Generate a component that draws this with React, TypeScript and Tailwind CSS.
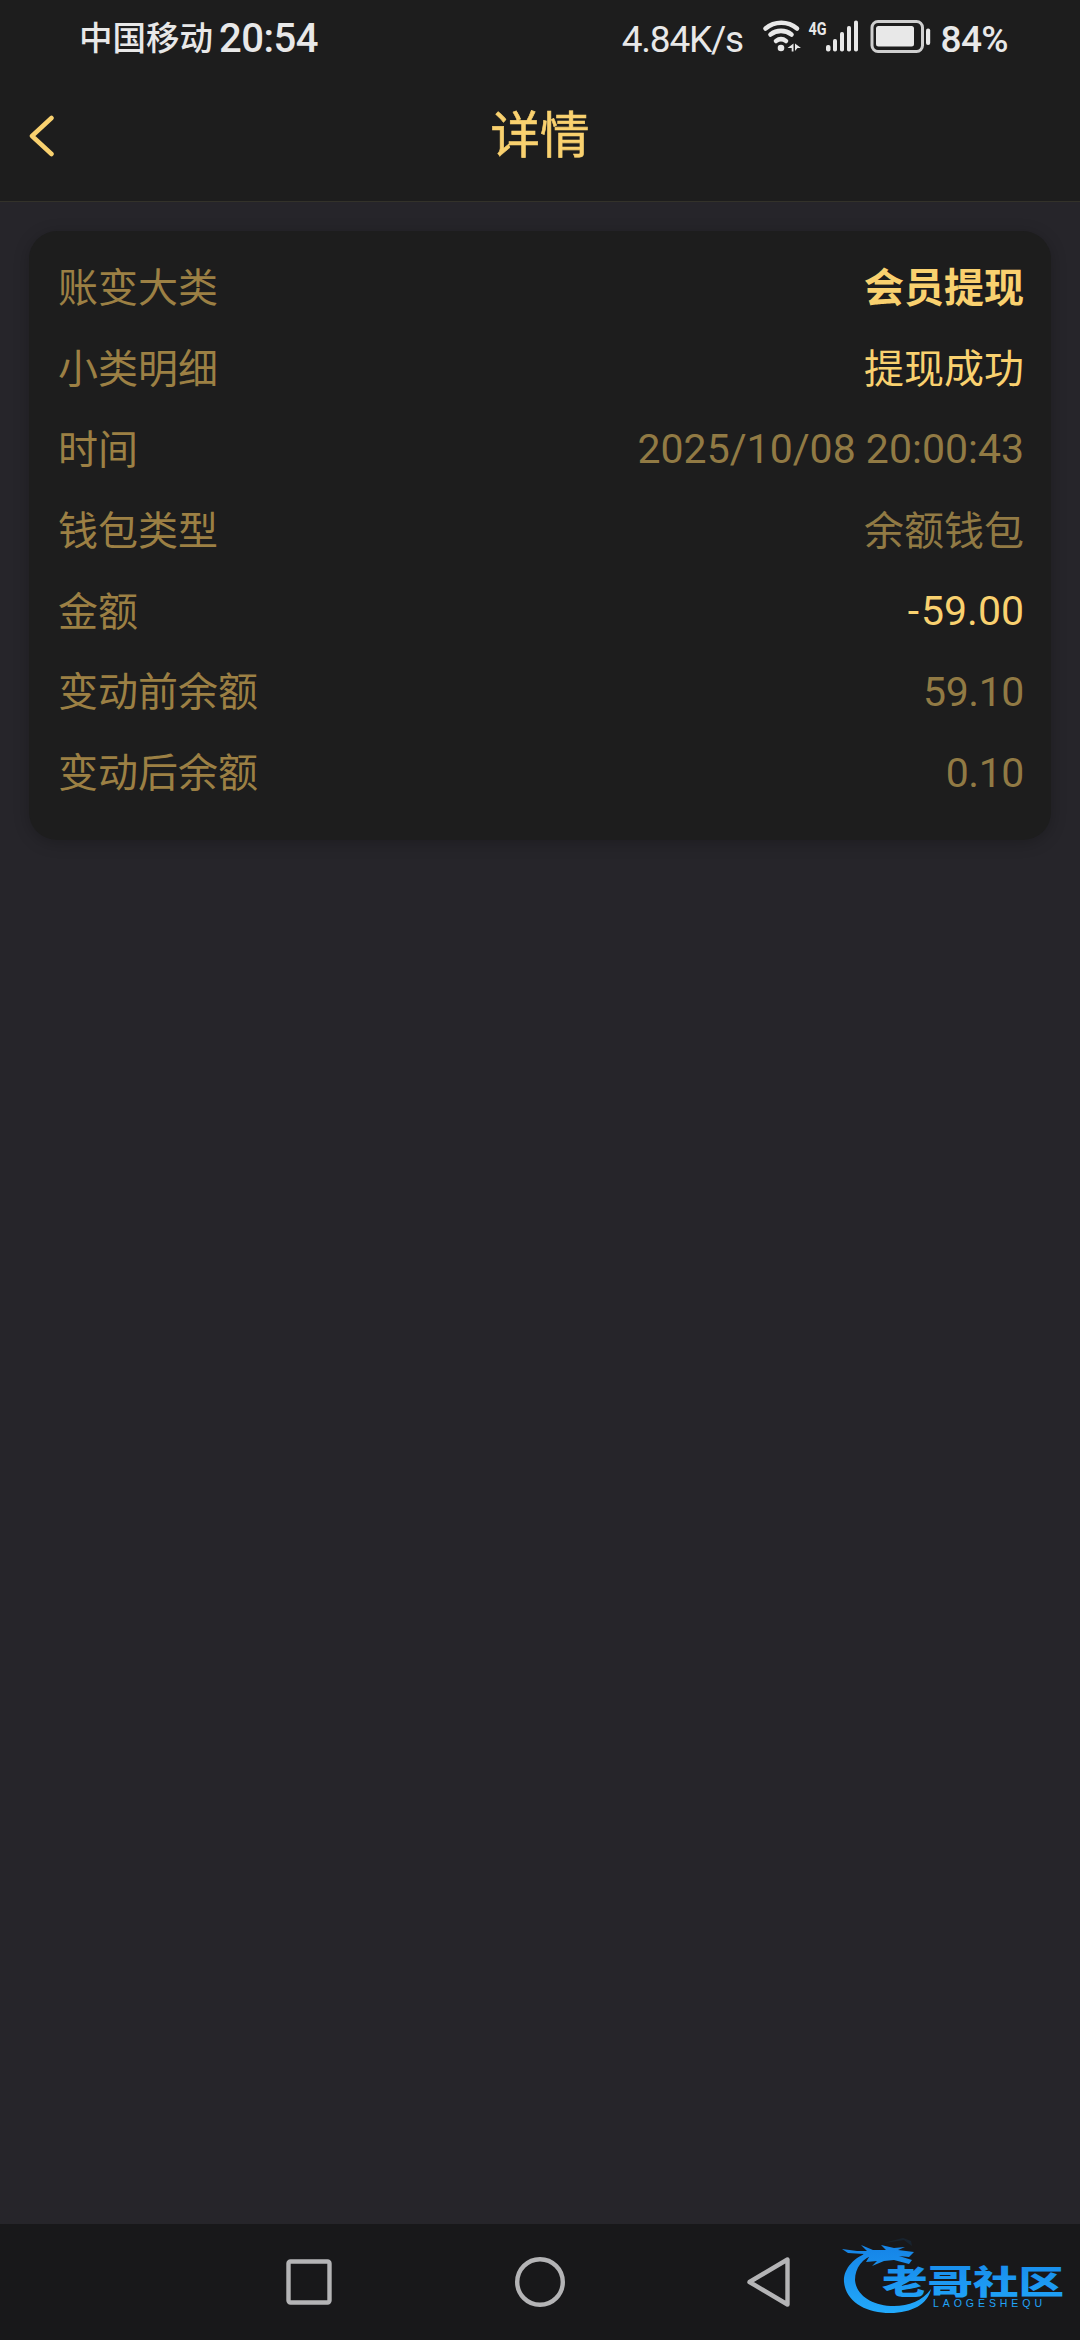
const rows = [
  { label: "账变大类", value: "会员提现", style: "font-bold text-[#f9d16f]" },
  { label: "小类明细", value: "提现成功", style: "text-[#f9d16f]" },
  { label: "时间", value: "2025/10/08 20:00:43", style: "pb-[2px] text-[41px] text-[#917a44]" },
  { label: "钱包类型", value: "余额钱包", style: "text-[#917a44]" },
  { label: "金额", value: "-59.00", style: "pb-[2px] text-[41px] text-[#f9d16f] first-letter:tracking-[2px]" },
  { label: "变动前余额", value: "59.10", style: "pb-[2px] text-[41px] text-[#917a44] tracking-[-0.4px]" },
  { label: "变动后余额", value: "0.10", style: "pb-[2px] text-[41px] text-[#917a44] tracking-[-0.4px]" },
];

function StatusBar() {
  return (
    <div className="flex h-[76px] items-center justify-between pl-[79px] pr-[45px] text-[#e8e8e8]">
      <div className="flex items-center pt-[2px]">
        <span className="text-[33.5px] font-medium leading-none">中国移动</span>
        <span className="ml-[6px] text-[40px] font-medium leading-none tracking-[-0.5px]">20:54</span>
      </div>
      <div className="flex items-center">
        <span className="pt-[2px] text-[37px] leading-none tracking-[-1.2px]">4.84K/s</span>
        <svg className="ml-[18px]" width="274" height="76" viewBox="760 0 274 76" fill="#e8e8e8">
          <g fill="none" stroke="#e8e8e8" strokeLinecap="round" strokeWidth="4.6">
            <path d="M764.5 28.500a24.500 24.500 0 0 1 31.500 0" />
            <path d="M769.500 34.500a17 17 0 0 1 21 0" />
            <path d="M775 41a8.500 8.500 0 0 1 10 0" />
          </g>
          <circle cx="780" cy="48" r="3.300" />
          <path d="M786.500 48l6-4.500v8h-1.800v-3.500zM794 43.500l6 4.500h-3.500l-2.500 3z" />
          <text x="807.500" y="34.500" fontSize="19" fontWeight="700" textLength="18" lengthAdjust="spacingAndGlyphs">4G</text>
          <rect x="825" y="45" width="4.500" height="6.500" rx="2" />
          <rect x="832" y="39" width="4" height="12.500" rx="1.800" />
          <rect x="839" y="32" width="4" height="19.500" rx="1.800" />
          <rect x="846" y="26" width="4" height="25.500" rx="1.800" />
          <rect x="853" y="20.500" width="4" height="31" rx="1.800" />
          <rect x="871" y="21.500" width="50.500" height="30" rx="6" fill="none" stroke="#cfcfcf" strokeWidth="3" />
          <rect x="875" y="26" width="38" height="20.500" rx="2.500" />
          <rect x="925" y="28.500" width="4.200" height="16.500" rx="2" />
          <text x="939.500" y="51.500" fontSize="37" fontWeight="500" textLength="68">84%</text>
        </svg>
      </div>
    </div>
  );
}

function Watermark() {
  return (
    <svg className="absolute right-0 bottom-0" width="260" height="130" viewBox="820 2210 260 130">
      <defs>
        <linearGradient id="blue" gradientUnits="userSpaceOnUse" x1="0" y1="2250" x2="0" y2="2312">
          <stop offset="0" stopColor="#1686e8" />
          <stop offset="1" stopColor="#22a9fb" />
        </linearGradient>
      </defs>
      <g fill="url(#blue)">
        <path d="M870 2252C853 2257 843 2270 844 2282C846 2302 866 2313 890 2313C912 2313 928 2304 931 2289C922 2301 909 2306 894 2306C872 2306 856 2295 855 2280C855 2268 862 2258 876 2254Z" />
        <path d="M842 2249L857 2251L867 2251L861 2245L873 2250L886 2250L881 2245L894 2248L905 2247L898 2250L914 2252L909 2257L899 2256L912 2260L909 2264L894 2260L884 2261L872 2266L877 2261L866 2262L869 2257L859 2258L864 2254L848 2253Z" />
        <path d="M884 2243L904 2240L912 2246L911 2241L903 2238Z" opacity=".1" />
        <text x="882" y="2294" fontSize="33" fontWeight="900" textLength="182" lengthAdjust="spacingAndGlyphs">老哥社区</text>
        <text x="933" y="2307" fontSize="10.500" fontFamily="Liberation Sans, sans-serif" textLength="109">LAOGESHEQU</text>
      </g>
    </svg>
  );
}

export default function App() {
  return (
    <div className="relative flex h-[2340px] w-[1080px] flex-col bg-[#26252a] font-[Roboto,'Noto_Sans_CJK_SC',sans-serif]">
      <header className="h-[202px] border-b border-[#33322a] bg-[#1d1d1d]">
        <StatusBar />
        <div className="flex h-[118px] items-center px-[28px] text-[#f9d16f]">
          <svg width="28" height="44" viewBox="0 0 28 44" fill="none" stroke="currentColor" strokeWidth="4.500" strokeLinecap="round" strokeLinejoin="round">
            <path d="M23.500 5L4 23L23.500 41" />
          </svg>
          <h1 className="mr-[28px] flex-1 pt-[3px] text-center text-[49.5px] leading-none [-webkit-text-stroke:0.6px]">详情</h1>
        </div>
      </header>

      <main className="flex-1 px-[29px] pt-[29px]">
        <div className="h-[609px] rounded-[28px] bg-[#1d1d1d] pr-[27px] pl-[29px] pt-[18px] shadow-[0_3px_16px_rgba(0,0,0,0.22)]">
          {rows.map((row) => (
            <div key={row.label} className="flex h-[80.8px] items-center justify-between text-[40px] leading-none">
              <span className="text-[#9c8044]">{row.label}</span>
              <span className={row.style}>{row.value}</span>
            </div>
          ))}
        </div>
      </main>

      <nav className="flex h-[116px] items-center bg-[#18181a] pl-[284px]">
        <svg width="510" height="60" viewBox="284 2252 510 60" fill="none" stroke="#b4b4b6" strokeWidth="4.400" strokeLinejoin="round">
          <rect x="288.500" y="2261.500" width="41" height="41" rx="2" />
          <circle cx="540" cy="2282" r="22.800" />
          <path d="M749.500 2282L787.500 2259.500V2304.500Z" />
        </svg>
      </nav>
      <Watermark />
    </div>
  );
}
